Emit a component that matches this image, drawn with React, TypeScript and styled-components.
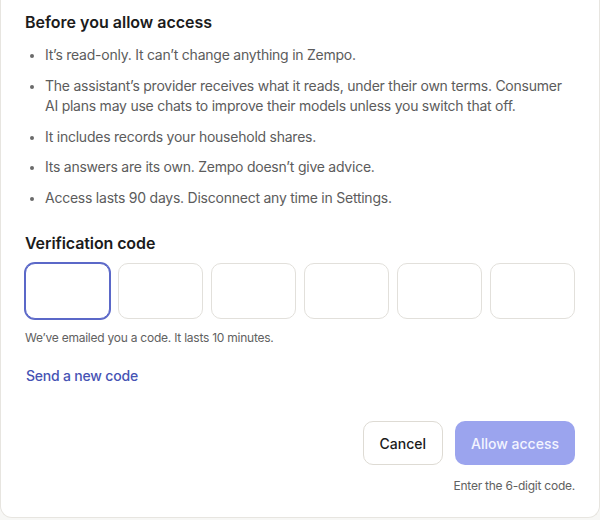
import React from "react";
import styled, { createGlobalStyle } from "styled-components";

const Global = createGlobalStyle`
  html, body { margin: 0; padding: 0; background: #f7f7f5; }
  body { font-family: Inter, "Noto Sans", "Liberation Sans", sans-serif; -webkit-font-smoothing: antialiased; }
  * { box-sizing: border-box; }
`;

const Card = styled.section`
  width: 600px;
  background: #ffffff;
  border: 1px solid #e7e5e0;
  border-top: none;
  border-radius: 0 0 12px 12px;
  padding: 10px 24px 22px 24px;
  display: flex;
  flex-direction: column;
`;

const Heading = styled.h2`
  margin: 0;
  font-size: 16px;
  line-height: 24px;
  font-weight: 600;
  color: #1b1b1b;
`;

const List = styled.ul`
  margin: 11px 0 0 0;
  padding: 0 10px 0 20px;
  display: flex;
  flex-direction: column;
  gap: 10px;
`;

const Item = styled.li`
  font-size: 14px;
  line-height: 20.5px;
  letter-spacing: -0.24px;
  color: #5c5c5c;
  &::marker { color: #6a6a6a; font-size: 12px; }
`;

const SubHeading = styled.h3`
  margin: 23px 0 0 0;
  font-size: 16px;
  line-height: 24px;
  font-weight: 600;
  letter-spacing: -0.1px;
  color: #1b1b1b;
`;

const CodeRow = styled.div`
  margin-top: 8px;
  display: grid;
  grid-template-columns: repeat(6, 1fr);
  gap: 8px;
`;

const CodeBox = styled.input<{ $active?: boolean }>`
  height: 56px;
  width: 100%;
  border-radius: 10px;
  border: 1px solid ${(p) => (p.$active ? "#5b68c8" : "#e2e0db")};
  box-shadow: ${(p) => (p.$active ? "0 0 0 1px #5b68c8" : "none")};
  background: #fff;
  outline: none;
  font-family: inherit;
  font-size: 20px;
  text-align: center;
`;

const Hint = styled.p<{ $align?: string; $top?: number }>`
  margin: ${(p) => p.$top ?? 9}px 0 0 0;
  font-size: 12px;
  line-height: 18px;
  letter-spacing: -0.24px;
  color: #616161;
  text-align: ${(p) => p.$align || "left"};
`;

const LinkButton = styled.button`
  margin-top: 19px;
  align-self: flex-start;
  background: none;
  border: none;
  padding: 0 0 0 1px;
  font-family: inherit;
  font-size: 14px;
  line-height: 20px;
  font-weight: 500;
  letter-spacing: -0.2px;
  color: #4653b4;
  cursor: pointer;
`;

const Actions = styled.div`
  margin-top: 35px;
  display: flex;
  justify-content: flex-end;
  gap: 12px;
`;

const Button = styled.button<{ $primary?: boolean }>`
  height: 44px;
  padding: 0 16px;
  border-radius: 10px;
  font-family: inherit;
  font-size: 14px;
  font-weight: 500;
  border: ${(p) => (p.$primary ? "none" : "1px solid #dedbd4")};
  background: ${(p) => (p.$primary ? "#9ba4ee" : "#ffffff")};
  color: ${(p) => (p.$primary ? "#f3f4ff" : "#1b1b1b")};
  cursor: ${(p) => (p.$primary ? "not-allowed" : "pointer")};
`;

const bullets = [
  "It’s read-only. It can’t change anything in Zempo.",
  "The assistant’s provider receives what it reads, under their own terms. Consumer AI plans may use chats to improve their models unless you switch that off.",
  "It includes records your household shares.",
  "Its answers are its own. Zempo doesn’t give advice.",
  "Access lasts 90 days. Disconnect any time in Settings.",
];

export default function App() {
  return (
    <>
      <Global />
      <Card>
        <Heading>Before you allow access</Heading>
        <List>
          {bullets.map((b) => (
            <Item key={b}>{b}</Item>
          ))}
        </List>
        <SubHeading>Verification code</SubHeading>
        <CodeRow>
          {[0, 1, 2, 3, 4, 5].map((i) => (
            <CodeBox key={i} $active={i === 0} inputMode="numeric" maxLength={1} aria-label={`Digit ${i + 1}`} />
          ))}
        </CodeRow>
        <Hint $top={10}>We’ve emailed you a code. It lasts 10 minutes.</Hint>
        <LinkButton>Send a new code</LinkButton>
        <Actions>
          <Button>Cancel</Button>
          <Button $primary disabled>Allow access</Button>
        </Actions>
        <Hint $align="right" $top={12}>Enter the 6-digit code.</Hint>
      </Card>
    </>
  );
}
